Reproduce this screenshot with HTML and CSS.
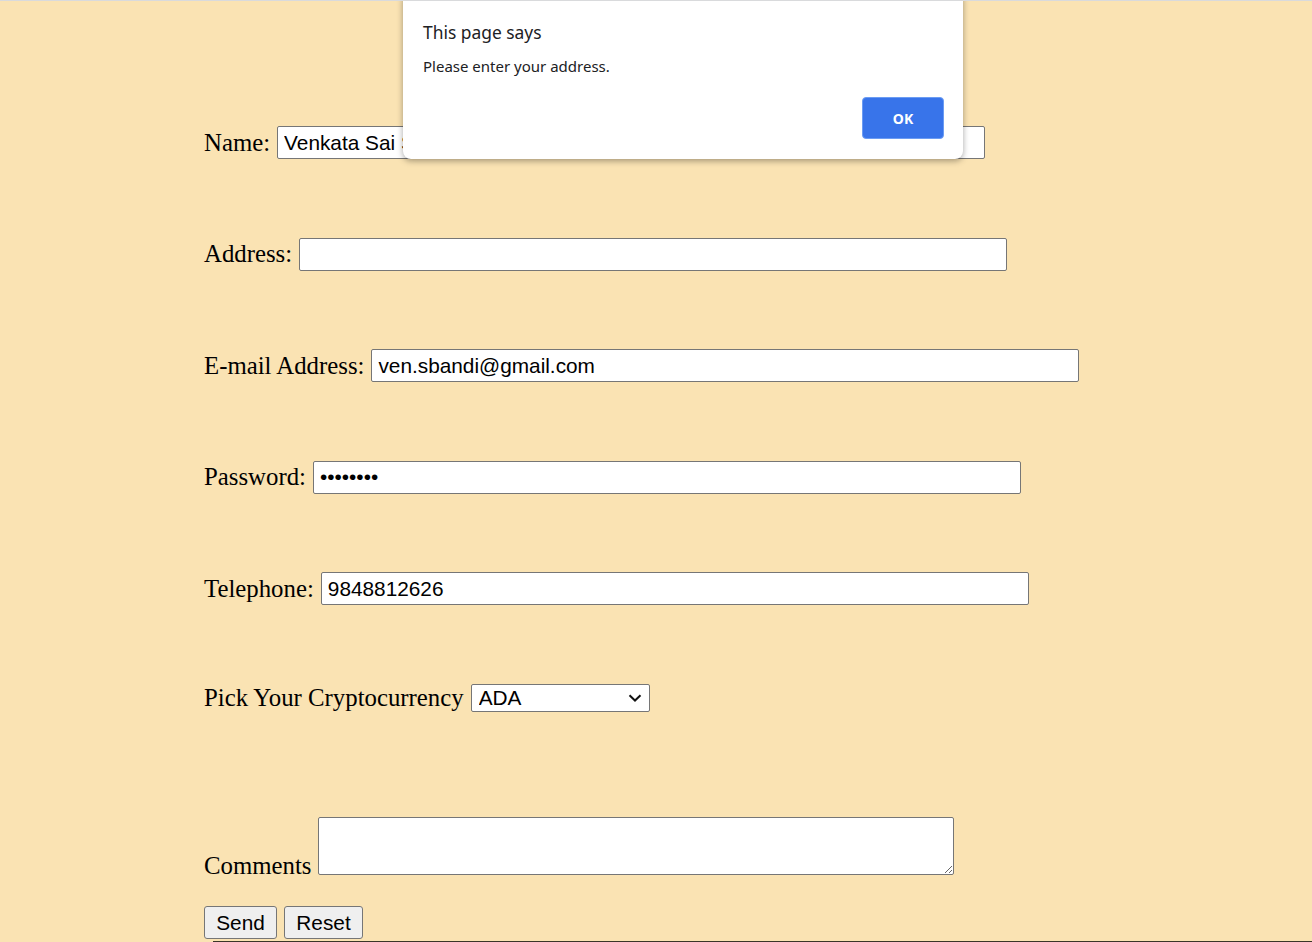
FILE: index.html
```html
<!DOCTYPE html>
<html lang="en">
<head>
<meta charset="utf-8">
<title>Form</title>
<link rel="stylesheet" href="styles.css">
</head>
<body>
<form class="form">
  <div class="row">
    <label class="label" for="name">Name:</label>
    <input class="field" id="name" type="text" value="Venkata Sai Sandeep Bandi">
  </div>
  <div class="row">
    <label class="label" for="address">Address:</label>
    <input class="field" id="address" type="text" value="">
  </div>
  <div class="row">
    <label class="label" for="email">E-mail Address:</label>
    <input class="field" id="email" type="text" value="ven.sbandi@gmail.com">
  </div>
  <div class="row">
    <label class="label" for="pw">Password:</label>
    <input class="field pw" id="pw" type="password" value="12345678">
  </div>
  <div class="row">
    <label class="label" for="tel">Telephone:</label>
    <input class="field" id="tel" type="text" value="9848812626">
  </div>
  <div class="row">
    <label class="label" for="crypto">Pick Your Cryptocurrency</label>
    <span class="select-wrap">
      <select class="select" id="crypto">
        <option>ADA</option>
        <option>BTC</option>
        <option>ETH</option>
      </select>
      <svg class="chev" width="14" height="8" viewBox="0 0 14 8"><path d="M1.5 1.2 L7 6.5 L12.5 1.2" fill="none" stroke="#111" stroke-width="2"/></svg>
    </span>
  </div>
  <div class="row row-comments">
    <label class="label label-comments" for="comments">Comments</label>
    <textarea class="area" id="comments"></textarea>
  </div>
  <div class="row row-buttons">
    <button class="btn btn-send" type="button">Send</button>
    <button class="btn btn-reset" type="button">Reset</button>
  </div>
</form>

<div class="dialog">
  <div class="dialog-title">This page says</div>
  <div class="dialog-msg">Please enter your address.</div>
  <div class="dialog-actions">
    <button class="ok" type="button">OK</button>
  </div>
</div>

<div class="taskbar-edge"></div>
</body>
</html>
```

FILE: styles.css
```css
html, body {
  margin: 0;
  padding: 0;
}

body {
  background: #fae3b3;
  border-top: 1px solid #d9dadc;
  height: 941px;
  overflow: hidden;
  position: relative;
  font-family: "Liberation Serif", "Times New Roman", serif;
  color: #000;
}

.form {
  display: flex;
  flex-direction: column;
  row-gap: 78.5px;
  padding: 125px 0 0 204px;
}

.row {
  display: flex;
  align-items: center;
  gap: 7px;
}

.label {
  font-size: 24.8px;
  line-height: 28px;
  white-space: nowrap;
}

.field {
  box-sizing: border-box;
  width: 708px;
  height: 33px;
  margin: 0;
  padding: 0 6px;
  border: 1px solid #767676;
  border-radius: 2px;
  background: #fff;
  font-family: "Liberation Sans", Arial, sans-serif;
  font-size: 20.8px;
  color: #000;
  outline: none;
}

.select-wrap {
  position: relative;
  display: inline-block;
}

.select {
  appearance: none;
  -webkit-appearance: none;
  box-sizing: border-box;
  width: 179px;
  height: 28px;
  margin: 0;
  padding: 0 0 0 7px;
  border: 1px solid #767676;
  border-radius: 2px;
  background: #fff;
  font-family: "Liberation Sans", Arial, sans-serif;
  font-size: 20.8px;
  color: #000;
  display: block;
}

.chev {
  position: absolute;
  right: 8px;
  top: 10px;
  pointer-events: none;
}

.row-comments {
  margin-top: 27px;
  align-items: flex-end;
}

.label-comments {
  line-height: 25px;
  margin-bottom: -3px;
}

.area {
  box-sizing: border-box;
  width: 636px;
  height: 58px;
  margin: 0;
  border: 1px solid #767676;
  border-radius: 2px;
  background: #fff;
  font-family: "Liberation Mono", monospace;
  font-size: 17px;
  display: block;
}

.row-buttons {
  margin-top: -47.5px;
}

.btn {
  box-sizing: border-box;
  height: 33px;
  margin: 0;
  padding: 0;
  border: 1px solid #767676;
  border-radius: 3px;
  background: #efefef;
  font-family: "Liberation Sans", Arial, sans-serif;
  font-size: 20.8px;
  color: #000;
}

.btn-send {
  width: 73px;
}

.btn-reset {
  width: 79px;
}

.dialog {
  position: absolute;
  left: 403px;
  top: -10px;
  width: 560px;
  height: 168px;
  box-sizing: border-box;
  background: #fff;
  border-radius: 8px;
  box-shadow: 0 2px 6px rgba(0, 0, 0, 0.35);
  padding: 29px 19px 0 20px;
  font-family: "Noto Sans", "Open Sans", sans-serif;
  color: #202124;
}

.dialog-title {
  font-size: 17.4px;
  line-height: 24px;
}

.dialog-msg {
  font-size: 15px;
  line-height: 20px;
  margin-top: 12px;
}

.dialog-actions {
  display: flex;
  justify-content: flex-end;
  margin-top: 21px;
}

.ok {
  box-sizing: border-box;
  width: 82px;
  height: 42px;
  margin: 0;
  border: 1px solid #6b9cf3;
  border-radius: 4px;
  background: #3874ea;
  color: #fff;
  font-family: "Noto Sans", "Open Sans", sans-serif;
  font-weight: 700;
  font-size: 14px;
}

.taskbar-edge {
  position: absolute;
  left: 213px;
  right: 0;
  bottom: 0;
  height: 1px;
  background: #3a3528;
}
```
